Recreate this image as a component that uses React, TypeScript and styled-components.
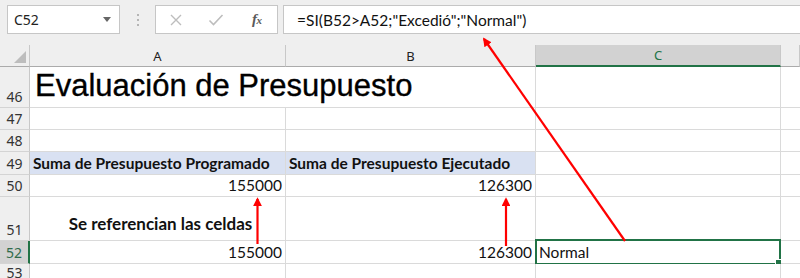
import React from "react";
import styled, { createGlobalStyle, css } from "styled-components";

const Global = createGlobalStyle`
  html, body { margin: 0; padding: 0; background: #ffffff; overflow: hidden; }
  #root { width: 800px; height: 278px; }
`;

const GREEN = "#217346";
const GRID = "#dadada";
const CELL_FONT = `Lato, "Open Sans", sans-serif`;
const UI_FONT = `"Noto Sans", "Open Sans", sans-serif`;

const Page = styled.div`
  position: relative;
  width: 800px;
  height: 278px;
  overflow: hidden;
  background: #ffffff;
`;

const Toolbar = styled.div`
  height: 45px;
  box-sizing: border-box;
  background: #efefef;
  display: flex;
  align-items: flex-start;
  padding: 5px 0 0 7px;
`;

const NameBox = styled.div`
  width: 113px;
  height: 29px;
  box-sizing: border-box;
  background: #fff;
  border: 1px solid #c6c6c6;
  display: flex;
  align-items: center;
  justify-content: space-between;
  padding: 0 6px 0 6px;
  font-family: ${UI_FONT};
  font-size: 14px;
  color: #222;
`;

const Caret = styled.span`
  width: 0;
  height: 0;
  border-left: 4px solid transparent;
  border-right: 4px solid transparent;
  border-top: 5px solid #666;
  margin-right: 2px;
`;

const Dots = styled.div`
  width: 35px;
  height: 29px;
  display: flex;
  flex-direction: column;
  align-items: center;
  justify-content: center;
  gap: 3px;
  & > i {
    width: 2px;
    height: 2px;
    background: #b5b5b5;
    display: block;
  }
`;

const IconBox = styled.div`
  width: 123px;
  height: 29px;
  box-sizing: border-box;
  background: #fff;
  border: 1px solid #c6c6c6;
  display: grid;
  grid-template-columns: 1fr 1fr 1fr;
  align-items: center;
  justify-items: center;
`;

const Fx = styled.span`
  font-family: "Liberation Serif", "DejaVu Serif", serif;
  font-style: italic;
  font-weight: 700;
  font-size: 15px;
  color: #5a5a5a;
  letter-spacing: -0.5px;
  & > sub {
    font-size: 11px;
    vertical-align: baseline;
  }
`;

const FormulaInput = styled.div`
  flex: 1;
  margin-left: 5px;
  height: 29px;
  box-sizing: border-box;
  background: #fff;
  border: 1px solid #c6c6c6;
  border-right: none;
  display: flex;
  align-items: center;
  padding-left: 13px;
  font-family: ${CELL_FONT};
  font-size: 15.5px;
  color: #111;
`;

const Sheet = styled.div`
  display: grid;
  grid-template-columns: 30px 256px 250px 245px 1fr;
  grid-template-rows: 22px 41px 22px 22px 23px 22px 44px 23px 1fr;
  height: 233px;
  background: #fff;
`;

const Corner = styled.div`
  background: #efefef;
  border-right: 1px solid #c8c8c8;
  border-bottom: 1px solid #ababab;
  position: relative;
  &::after {
    content: "";
    position: absolute;
    right: 3px;
    bottom: 3px;
    width: 0;
    height: 0;
    border-left: 12px solid transparent;
    border-bottom: 12px solid #bdbdbd;
  }
`;

const ColHeader = styled.div<{ $sel?: boolean }>`
  background: ${(p) => (p.$sel ? "#d2d2d2" : "#efefef")};
  border-right: 1px solid #c8c8c8;
  border-bottom: ${(p) => (p.$sel ? `2px solid ${GREEN}` : "1px solid #ababab")};
  display: flex;
  align-items: center;
  justify-content: center;
  font-family: ${UI_FONT};
  font-size: 13px;
  color: ${(p) => (p.$sel ? GREEN : "#222")};
`;

const RowHeader = styled.div<{ $sel?: boolean }>`
  background: ${(p) => (p.$sel ? "#d2d2d2" : "#efefef")};
  border-bottom: 1px solid #d4d4d4;
  border-right: ${(p) => (p.$sel ? `2px solid ${GREEN}` : "1px solid #c8c8c8")};
  display: flex;
  align-items: flex-end;
  justify-content: center;
  padding-bottom: 2px;
  box-sizing: border-box;
  font-family: ${UI_FONT};
  font-size: 14px;
  line-height: 17px;
  color: ${(p) => (p.$sel ? "#2f6b4b" : "#333")};
`;

const Cell = styled.div<{
  $align?: "left" | "right" | "center";
  $bold?: boolean;
  $bg?: string;
  $span?: number;
  $note?: boolean;
  $title?: boolean;
  $noRight?: boolean;
}>`
  box-sizing: border-box;
  border-right: ${(p) => (p.$noRight ? "none" : `1px solid ${GRID}`)};
  border-bottom: 1px solid ${GRID};
  background: ${(p) => p.$bg ?? "#fff"};
  display: flex;
  align-items: flex-end;
  justify-content: ${(p) =>
    p.$align === "right" ? "flex-end" : p.$align === "center" ? "center" : "flex-start"};
  padding: 0 3px 2px 3px;
  font-family: ${CELL_FONT};
  font-size: 15.5px;
  line-height: 18px;
  font-weight: ${(p) => (p.$bold ? 700 : 400)};
  color: #111;
  white-space: nowrap;
  overflow: visible;
  position: relative;
  ${(p) => p.$span && css`grid-column: span ${p.$span};`}
  ${(p) =>
    p.$note &&
    css`
      align-items: center;
      font-size: 17px;
      padding: 11px 0 0 6px;
    `}
  ${(p) =>
    p.$title &&
    css`
      font-family: "Liberation Sans", Arial, sans-serif;
      font-size: 31px;
      line-height: 36px;
      padding: 0 0 3px 5px;
      color: #000;
      -webkit-text-stroke: 0.35px #000;
    `}
`;

const Selection = styled.div`
  position: absolute;
  left: -1px;
  top: -2px;
  right: -1px;
  bottom: -2px;
  border: 2px solid ${GREEN};
  pointer-events: none;
  &::after {
    content: "";
    position: absolute;
    right: -4px;
    bottom: -4px;
    width: 6px;
    height: 6px;
    background: ${GREEN};
    border: 1px solid #fff;
  }
`;

const Overlay = styled.svg`
  position: absolute;
  left: 0;
  top: 0;
  pointer-events: none;
`;

type RowDef = {
  n: number;
  sel?: boolean;
  cells: React.ReactNode;
};

export default function App() {
  const rows: RowDef[] = [
    {
      n: 46,
      cells: (
        <>
          <Cell $span={2} $title>
            Evaluación de Presupuesto
          </Cell>
          <Cell />
          <Cell $noRight />
        </>
      ),
    },
    { n: 47, cells: (<><Cell /><Cell /><Cell /><Cell $noRight /></>) },
    { n: 48, cells: (<><Cell /><Cell /><Cell /><Cell $noRight /></>) },
    {
      n: 49,
      cells: (
        <>
          <Cell $bold $bg="#d9e1f2">Suma de Presupuesto Programado</Cell>
          <Cell $bold $bg="#d9e1f2">Suma de Presupuesto Ejecutado</Cell>
          <Cell />
          <Cell $noRight />
        </>
      ),
    },
    {
      n: 50,
      cells: (
        <>
          <Cell $align="right">155000</Cell>
          <Cell $align="right">126300</Cell>
          <Cell />
          <Cell $noRight />
        </>
      ),
    },
    {
      n: 51,
      cells: (
        <>
          <Cell $align="center" $note $bold>
            Se referencian las celdas
          </Cell>
          <Cell />
          <Cell />
          <Cell $noRight />
        </>
      ),
    },
    {
      n: 52,
      sel: true,
      cells: (
        <>
          <Cell $align="right">155000</Cell>
          <Cell $align="right">126300</Cell>
          <Cell>
            Normal
            <Selection />
          </Cell>
          <Cell $noRight />
        </>
      ),
    },
    { n: 53, cells: (<><Cell /><Cell /><Cell /><Cell $noRight /></>) },
  ];

  return (
    <Page>
      <Global />
      <Toolbar>
        <NameBox>
          <span>C52</span>
          <Caret />
        </NameBox>
        <Dots>
          <i />
          <i />
          <i />
        </Dots>
        <IconBox>
          <svg width="14" height="14" viewBox="0 0 14 14">
            <path d="M2 2 L12 12 M12 2 L2 12" stroke="#bdbdbd" strokeWidth="1.4" fill="none" />
          </svg>
          <svg width="16" height="14" viewBox="0 0 16 14">
            <path d="M1.5 7.5 L5.5 11.5 L14.5 2" stroke="#bdbdbd" strokeWidth="1.6" fill="none" />
          </svg>
          <Fx>
            f<sub>x</sub>
          </Fx>
        </IconBox>
        <FormulaInput>=SI(B52&gt;A52;"Excedió";"Normal")</FormulaInput>
      </Toolbar>
      <Sheet>
        <Corner />
        <ColHeader>A</ColHeader>
        <ColHeader>B</ColHeader>
        <ColHeader $sel>C</ColHeader>
        <ColHeader />
        {rows.map((r) => (
          <React.Fragment key={r.n}>
            <RowHeader $sel={r.sel}>{r.n}</RowHeader>
            {r.cells}
          </React.Fragment>
        ))}
      </Sheet>
      <Overlay width="800" height="278" viewBox="0 0 800 278">
        <defs>
          <marker id="ah" viewBox="0 0 10 10" refX="8" refY="5" markerWidth="4" markerHeight="4" orient="auto">
            <path d="M0 0 L10 5 L0 10 Z" fill="#ff0000" />
          </marker>
        </defs>
        <line x1="257.5" y1="244" x2="257.5" y2="199" stroke="#ff0000" strokeWidth="2.2" markerEnd="url(#ah)" />
        <line x1="506" y1="246" x2="506" y2="199" stroke="#ff0000" strokeWidth="2.2" markerEnd="url(#ah)" />
        <line x1="625" y1="241" x2="484" y2="39" stroke="#ff0000" strokeWidth="2.2" markerEnd="url(#ah)" />
      </Overlay>
    </Page>
  );
}
